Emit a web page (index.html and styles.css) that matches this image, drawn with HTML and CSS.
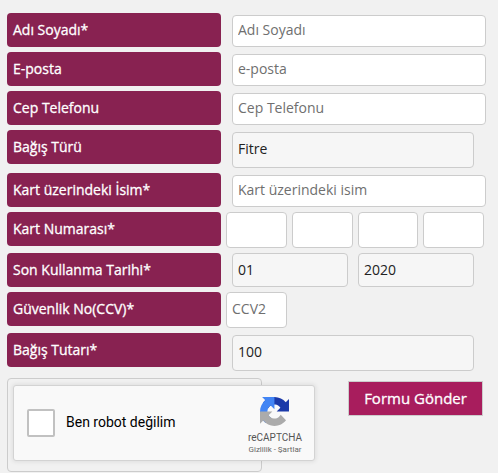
FILE: index.html
```html
<!DOCTYPE html>
<html lang="tr">
<head>
<meta charset="utf-8">
<title>Bağış Formu</title>
<link rel="stylesheet" href="styles.css">
</head>
<body>
<form class="form">
  <div class="row"><label class="label">Adı Soyadı*</label><input class="field field-wide" placeholder="Adı Soyadı"></div>
  <div class="row"><label class="label">E-posta</label><input class="field field-wide" placeholder="e-posta"></div>
  <div class="row"><label class="label">Cep Telefonu</label><input class="field field-wide" placeholder="Cep Telefonu"></div>
  <div class="row"><label class="label">Bağış Türü</label><div class="field field-static field-full">Fitre</div></div>
  <div class="row"><label class="label">Kart üzerindeki İsim*</label><input class="field field-wide" placeholder="Kart üzerindeki isim"></div>
  <div class="row">
    <label class="label">Kart Numarası*</label>
    <div class="cards">
      <input class="field-small"><input class="field-small"><input class="field-small field-narrow"><input class="field-small">
    </div>
  </div>
  <div class="row">
    <label class="label">Son Kullanma Tarihi*</label>
    <div class="dates"><div class="field field-static field-date">01</div><div class="field field-static field-date">2020</div></div>
  </div>
  <div class="row"><label class="label">Güvenlik No(CCV)*</label><div class="cards"><input class="field-small" placeholder="CCV2"></div></div>
  <div class="row row-last"><label class="label">Bağış Tutarı*</label><div class="field field-static field-full">100</div></div>
  <div class="bottom">
    <div class="captcha-wrap">
      <div class="captcha">
        <span class="check"></span>
        <span class="captcha-text">Ben robot değilim</span>
        <div class="brand">
          <svg class="logo" viewBox="0 0 64 64" aria-hidden="true">
            <path d="M64 31.955l-.033-1.37V4.687l-7.16 7.16C50.948 4.674 42.033.093 32.05.093c-10.4 0-19.622 4.96-25.458 12.64l11.736 11.86a15.55 15.55 0 0 1 4.754-5.334c2.05-1.6 4.952-2.906 8.968-2.906.485 0 .86.057 1.135.163 4.976.393 9.288 3.14 11.828 7.124l-8.307 8.307L64 31.953" fill="#1c3aa9"/>
            <path d="M31.862.001l-1.37.033H4.594l7.16 7.16C4.58 13.053 0 21.968 0 31.95c0 10.4 4.96 19.622 12.64 25.458L24.5 45.672a15.55 15.55 0 0 1-5.334-4.754c-1.6-2.05-2.906-4.952-2.906-8.968 0-.485.057-.86.163-1.135.393-4.976 3.14-9.288 7.124-11.828l8.307 8.307L31.86.001" fill="#4285f4"/>
            <path d="M.001 31.955l.033 1.37v25.898l7.16-7.16c5.86 7.173 14.774 11.754 24.76 11.754 10.4 0 19.622-4.96 25.458-12.64l-11.736-11.86a15.55 15.55 0 0 1-4.754 5.334c-2.05 1.6-4.952 2.906-8.968 2.906-.485 0-.86-.057-1.135-.163-4.976-.393-9.288-3.14-11.828-7.124l8.307-8.307c-10.522.04-22.4.066-27.295 0" fill="#ababab"/>
          </svg>
          <span class="brand-name">reCAPTCHA</span>
          <span class="brand-links">Gizlilik - Şartlar</span>
        </div>
      </div>
    </div>
    <button class="submit" type="button">Formu Gönder</button>
  </div>
</form>
</body>
</html>
```
FILE: styles.css
```css
* { box-sizing: border-box; }
html, body { margin: 0; height: 100%; overflow: hidden; }
body { background: #f1f1f1; font-family: "Open Sans", sans-serif; font-size: 14px; color: #333; }
.form { padding: 13px 0 0 7px; }
.row { display: flex; align-items: flex-start; margin-bottom: 5px; }
.row-last { margin-bottom: 7px; }
.label {
  flex: none; width: 214px; height: 34px; padding: 6px 6px; line-height: 21px;
  background: #882251; color: #fff; border-radius: 4px; font-weight: 400; font-size: 14px;
  -webkit-text-stroke: 0.3px #fff;
}
.field, .field-small {
  display: block; font: 14px "Open Sans", sans-serif; background: #fff;
  border: 1px solid #ccc; border-radius: 4px; color: #333; outline: none;
}
.field::placeholder, .field-small::placeholder { color: #6f6f6f; opacity: 1; }
.field { margin: 2px 0 0 11px; padding: 0 5px 3px; }
.field-wide { width: 254px; height: 32px; }
.field-static { background: #f6f6f6; display: flex; align-items: center; color: #222; }
.field-full { width: 242px; height: 36px; }
.field-date { width: 116px; height: 34px; margin-top: 0; margin-left: 0; padding-bottom: 2px; }
.dates { display: flex; gap: 10px; margin-left: 11px; }
.cards { display: flex; gap: 5px; margin-left: 5px; }
.field-small { width: 61px; height: 36px; padding: 0 5px 3px; }
.field-narrow { width: 60px; }
.bottom { display: flex; align-items: flex-start; }
.captcha-wrap {
  flex: none; width: 255px; height: 94px; padding: 6px 0 0 5px;
  border: 1px solid #ccc; border-radius: 4px;
}
.captcha {
  position: relative; display: flex; align-items: center; width: 302px; height: 76px;
  padding-left: 13px; background: #f9f9f9; border: 1px solid #d3d3d3; border-radius: 3px;
  box-shadow: 0 0 4px 1px rgba(0, 0, 0, 0.08); font-family: Roboto, sans-serif; color: #000;
}
.check { flex: none; width: 28px; height: 28px; background: #fff; border: 2px solid #c1c1c1; border-radius: 2px; }
.captcha-text { margin-left: 11px; font-size: 14px; padding-bottom: 2px; }
.brand {
  position: absolute; top: 11px; right: 12px; width: 56px;
  display: flex; flex-direction: column; align-items: center; color: #555;
}
.logo { width: 29px; height: 29px; display: block; margin-bottom: 5px; }
.brand-name { font-size: 10px; line-height: 13px; white-space: nowrap; margin-left: 2px; }
.brand-links { font-size: 8px; line-height: 11px; white-space: nowrap; color: #666; margin-left: 2px; }
.submit {
  flex: none; width: 135px; height: 35px; margin: 3px 0 0 86px; padding: 0 0 2px;
  background: #a81d5d; color: #fff; border: 1px solid #ccc;
  font: 400 15px "Open Sans", sans-serif; -webkit-text-stroke: 0.3px #fff;
}
```
